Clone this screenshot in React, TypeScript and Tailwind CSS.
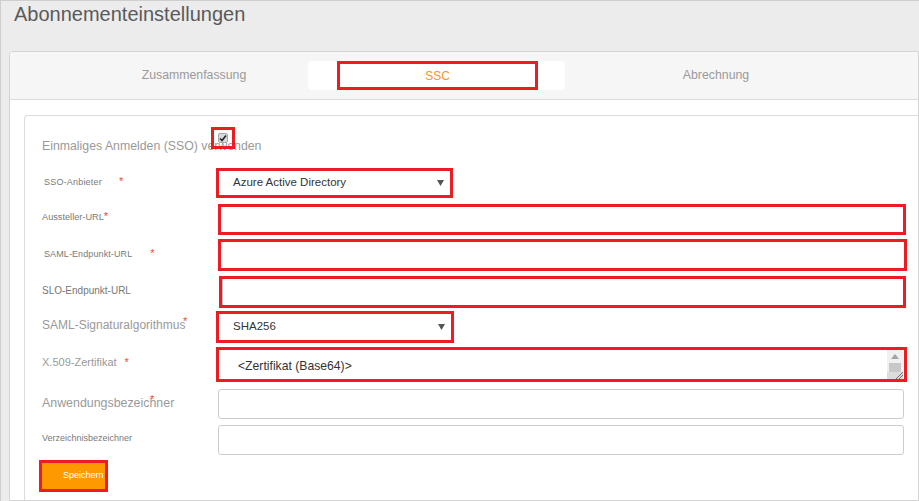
import React from "react";

function Star({ className = "" }: { className?: string }) {
  return <span className={"text-[#ef4a2d] text-[11px] " + className}>*</span>;
}

function Arrow() {
  return (
    <svg width="7" height="6" viewBox="0 0 7 6" className="shrink-0">
      <path d="M0 0 L7 0 L3.5 6 Z" fill="#555" />
    </svg>
  );
}

export default function App() {
  return (
    <div className="w-[919px] h-[501px] overflow-hidden bg-[#ececec] border-l border-t border-[#cfcfcf] font-['Liberation_Sans',Arial,sans-serif]">
      <div className="h-[50px] pl-[13px] pt-[2px]">
        <h1 className="text-[20px] leading-[23px] text-[#5a5a5a]">Abonnementeinstellungen</h1>
      </div>

      <div className="ml-[8px] w-[910px] h-[450px] border border-[#d4d4d4] rounded-tl-[4px] bg-white overflow-hidden">
        {/* tabs */}
        <div className="h-[48px] bg-[#f6f6f6] border-b border-[#dcdcdc] flex pt-[9px] pl-[70px]">
          <div className="w-[228px] h-[29px] flex items-center justify-center text-[12.3px] text-[#9a9a9a]">
            Zusammenfassung
          </div>
          <div className="w-[257px] h-[29px] bg-white rounded-[4px] pl-[29px]">
            <div className="w-[201px] h-[29px] border-[3px] border-[#ed1c24] flex items-center justify-center text-[12px] text-[#f7941d]">
              SSC
            </div>
          </div>
          <div className="w-[302px] h-[29px] flex items-center justify-center text-[12.3px] text-[#9a9a9a]">
            Abrechnung
          </div>
        </div>

        {/* body */}
        <div className="pl-[14px] pt-[15px]">
          <div className="w-[1000px] h-[385px] border-l border-t border-[#dcdcdc] rounded-tl-[4px] pl-[17px]">
            {/* SSO checkbox */}
            <div className="relative mt-[11px] h-[22px] flex items-end">
              <span className="mb-[-4px] text-[12.3px] leading-[14px] text-[#9a9a9a]">Einmaliges Anmelden (SSO) verwenden</span>
              <div className="absolute left-[169px] top-0 w-[24px] h-[22px] border-[3px] border-[#ed1c24] flex items-center justify-center">
                <div className="w-[10px] h-[10px] rounded-[2px] bg-[#d9d9d9] border border-[#a8a8a8] flex items-center justify-center">
                  <svg width="8" height="8" viewBox="0 0 8 8">
                    <path d="M1 4.5 L3 6.5 L7 1.5" stroke="#222" strokeWidth="1.6" fill="none" />
                  </svg>
                </div>
              </div>
            </div>

            {/* SSO-Anbieter */}
            <div className="mt-[19px] h-[30px] flex items-center">
              <div className="w-[174px] shrink-0 pl-[2px] mb-[4px] text-[9px] text-[#7a7a7a] tracking-[0.2px]">
                SSO-Anbieter<Star className="ml-[17px]" />
              </div>
              <div className="w-[237px] h-[30px] border-[3px] border-[#ed1c24] flex items-center pl-[14px] pr-[6px]">
                <span className="flex-1 text-[11.5px] text-[#333]">Azure Active Directory</span>
                <Arrow />
              </div>
            </div>

            {/* Aussteller-URL */}
            <div className="mt-[6px] h-[31px] flex items-center">
              <div className="w-[176px] shrink-0 mb-[7px] text-[9.2px] text-[#7a7a7a]">
                Aussteller-URL<Star />
              </div>
              <div className="w-[688px] h-[31px] border-[3px] border-[#ed1c24]" />
            </div>

            {/* SAML-Endpunkt-URL */}
            <div className="mt-[4px] h-[32px] flex items-center">
              <div className="w-[176px] shrink-0 pl-[2px] mb-[4px] text-[9px] text-[#7a7a7a] tracking-[0.1px]">
                SAML-Endpunkt-URL<Star className="ml-[18px]" />
              </div>
              <div className="w-[689px] h-[32px] border-[3px] border-[#ed1c24]" />
            </div>

            {/* SLO-Endpunkt-URL */}
            <div className="mt-[5px] h-[32px] flex items-center">
              <div className="w-[177px] shrink-0 mb-[4px] text-[10px] text-[#777]">SLO-Endpunkt-URL</div>
              <div className="w-[687px] h-[32px] border-[3px] border-[#ed1c24]">
                <div className="h-full w-[2px] border-l border-[#bdbdbd]" />
              </div>
            </div>

            {/* SAML-Signaturalgorithmus */}
            <div className="mt-[3px] h-[32px] flex items-center">
              <div className="relative w-[174px] shrink-0 mb-[4px] text-[12px] text-[#9a9a9a]">
                SAML-Signaturalgorithmus
                <Star className="absolute left-[141px] top-[-3px]" />
              </div>
              <div className="w-[238px] h-[32px] border-[3px] border-[#ed1c24] flex items-center pl-[14px] pr-[6px]">
                <span className="flex-1 text-[11.5px] text-[#333]">SHA256</span>
                <Arrow />
              </div>
            </div>

            {/* X.509-Zertifikat */}
            <div className="mt-[4px] h-[35px] flex items-center">
              <div className="w-[174px] shrink-0 mb-[4px] text-[11px] text-[#9a9a9a]">
                X.509-Zertifikat<Star className="ml-[8px]" />
              </div>
              <div className="w-[691px] h-[35px] border-[3px] border-[#ed1c24] flex pr-[1px]">
                <div className="flex-1 flex items-center pl-[19px] pt-[4px] text-[12.2px] text-[#333]">
                  &lt;Zertifikat (Base64)&gt;
                </div>
                <div className="w-[16px] h-full bg-[#f0f0f0] flex flex-col">
                  <div className="h-[13px] flex items-center justify-center">
                    <svg width="8" height="5" viewBox="0 0 8 5">
                      <path d="M0 5 L4 0 L8 5 Z" fill="#a3a3a3" />
                    </svg>
                  </div>
                  <div className="h-[9px] mx-[2px] bg-[#c8c8c8]" />
                  <div className="flex-1 flex justify-end items-end bg-[#dcdcdc]">
                    <svg width="8" height="7" viewBox="0 0 8 7">
                      <path d="M1 7 L8 0 M4 7 L8 3" stroke="#555" strokeWidth="0.8" />
                    </svg>
                  </div>
                </div>
              </div>
            </div>

            {/* Anwendungsbezeichner */}
            <div className="mt-[7px] h-[30px] flex items-center">
              <div className="relative w-[176px] shrink-0 mb-[2px] text-[12.4px] text-[#9a9a9a]">
                Anwendungsbezeichner
                <Star className="absolute left-[108px] top-[-3px]" />
              </div>
              <div className="w-[686px] h-[30px] border border-[#cccccc] rounded-[3px]" />
            </div>

            {/* Verzeichnisbezeichner */}
            <div className="mt-[6px] h-[30px] flex items-center">
              <div className="w-[176px] shrink-0 mb-[2px] text-[9px] text-[#7a7a7a]">Verzeichnisbezeichner</div>
              <div className="w-[686px] h-[30px] border border-[#cccccc] rounded-[3px]" />
            </div>

            {/* Speichern */}
            <div className="mt-[5px] ml-[-3px] w-[69px] h-[32px] border-[3px] border-[#ed1c24] bg-[#ff9900] flex items-center pl-[21px] text-[9px] text-white">
              Speichern
            </div>
          </div>
        </div>
      </div>
    </div>
  );
}
